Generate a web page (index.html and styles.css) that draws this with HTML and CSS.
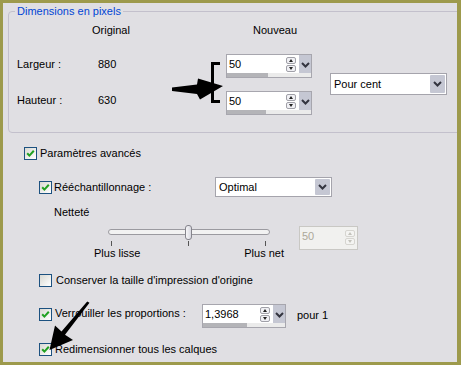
FILE: index.html
```html
<!DOCTYPE html>
<html lang="fr">
<head>
<meta charset="utf-8">
<title>Dimensions</title>
<link rel="stylesheet" href="styles.css">
</head>
<body>
<div class="frame">
  <div class="panel">
    <fieldset class="group">
      <legend>Dimensions en pixels</legend>
      <div class="dims">
        <span class="hd orig">Original</span>
        <span class="hd nouv">Nouveau</span>

        <span class="lbl r3">Largeur :</span>
        <span class="num r3">880</span>
        <div class="spin spin-w86 r3 c3">
          <div class="spin-main">
            <span class="spin-val">50</span>
            <span class="spin-btns"><span class="sb up"></span><span class="sb dn"></span></span>
            <span class="spin-drop"><svg width="9" height="6" viewBox="0 0 9 6"><path d="M1 1 L4.5 4.5 L8 1" fill="none" stroke="#33343f" stroke-width="2"/></svg></span>
          </div>
          <div class="spin-bar"><span class="fill" style="width:41px"></span></div>
        </div>

        <span class="lbl r5 lbl-b">Hauteur :</span>
        <span class="num r5 lbl-b">630</span>
        <div class="spin spin-w86 r5 c3">
          <div class="spin-main">
            <span class="spin-val">50</span>
            <span class="spin-btns"><span class="sb up"></span><span class="sb dn"></span></span>
            <span class="spin-drop"><svg width="9" height="6" viewBox="0 0 9 6"><path d="M1 1 L4.5 4.5 L8 1" fill="none" stroke="#33343f" stroke-width="2"/></svg></span>
          </div>
          <div class="spin-bar"><span class="fill" style="width:39px"></span></div>
        </div>

        <div class="select unit">
          <span class="sel-text">Pour cent</span>
          <span class="sel-btn"><svg width="9" height="6" viewBox="0 0 9 6"><path d="M1 1 L4.5 4.5 L8 1" fill="none" stroke="#33343f" stroke-width="2"/></svg></span>
        </div>
      </div>
    </fieldset>

    <div class="adv">
      <div class="row row-top">
        <span class="cb on"><svg width="11" height="11" viewBox="0 0 11 11"><path d="M2.2 5.2 L4.4 7.6 L8.8 2.8" fill="none" stroke="#21a121" stroke-width="2"/></svg></span>
        <span class="txt">Paramètres avancés</span>
      </div>

      <div class="sub">
        <div class="row row-reech">
          <span class="cb on"><svg width="11" height="11" viewBox="0 0 11 11"><path d="M2.2 5.2 L4.4 7.6 L8.8 2.8" fill="none" stroke="#21a121" stroke-width="2"/></svg></span>
          <span class="txt reech-lbl">Rééchantillonnage :</span>
          <div class="select optimal">
            <span class="sel-text">Optimal</span>
            <span class="sel-btn"><svg width="9" height="6" viewBox="0 0 9 6"><path d="M1 1 L4.5 4.5 L8 1" fill="none" stroke="#33343f" stroke-width="2"/></svg></span>
          </div>
        </div>

        <div class="nettete">Netteté</div>

        <div class="sharp-row">
          <div class="slider">
            <div class="track-area">
              <div class="track"></div>
              <span class="thumb"></span>
            </div>
            <div class="ticks"><i></i><i></i><i></i></div>
            <div class="slider-labels"><span>Plus lisse</span><span>Plus net</span></div>
          </div>
          <div class="spin-dis">
            <span class="dis-val">50</span>
            <span class="spin-btns dis"><span class="sb up"></span><span class="sb dn"></span></span>
          </div>
        </div>

        <div class="row row-cons">
          <span class="cb"></span>
          <span class="txt">Conserver la taille d'impression d'origine</span>
        </div>

        <div class="row row-lock">
          <span class="cb on cb-lock"><svg width="11" height="11" viewBox="0 0 11 11"><path d="M2.2 5.2 L4.4 7.6 L8.8 2.8" fill="none" stroke="#21a121" stroke-width="2"/></svg></span>
          <span class="txt lock-lbl">Verrouiller les proportions :</span>
          <div class="spin spin-w84">
            <div class="spin-main">
              <span class="spin-val">1,3968</span>
              <span class="spin-btns"><span class="sb up"></span><span class="sb dn"></span></span>
              <span class="spin-drop"><svg width="9" height="6" viewBox="0 0 9 6"><path d="M1 1 L4.5 4.5 L8 1" fill="none" stroke="#33343f" stroke-width="2"/></svg></span>
            </div>
            <div class="spin-bar"><span class="fill" style="width:44px"></span></div>
          </div>
          <span class="txt pour">pour 1</span>
        </div>

        <div class="row row-redim">
          <span class="cb on"><svg width="11" height="11" viewBox="0 0 11 11"><path d="M2.2 5.2 L4.4 7.6 L8.8 2.8" fill="none" stroke="#21a121" stroke-width="2"/></svg></span>
          <span class="txt">Redimensionner tous les calques</span>
        </div>
      </div>
    </div>
  </div>
</div>

<svg class="overlay" width="461" height="365" viewBox="0 0 461 365">
  <path d="M220 63.5 H212.5 V101.5 H220" fill="none" stroke="#000" stroke-width="3"/>
  <polygon points="172,87.5 197,84.5 198,78.5 223,86 200,99.5 197,94 172,91" fill="#000"/>
  <polygon points="87.2,301.4 61.5,331.5 55,325.5 49.5,350 73,340 65,334.7 89.5,302.8" fill="#000"/>
</svg>
</body>
</html>
```

FILE: styles.css
```css
* { box-sizing: border-box; }

html, body {
  margin: 0;
  padding: 0;
}

body {
  background: #9d9a4c;
  font-family: "Liberation Sans", Arial, sans-serif;
  font-size: 11px;
  line-height: 13px;
  color: #000;
  width: 461px;
  height: 365px;
  position: relative;
  overflow: hidden;
}

.frame {
  padding: 3px 4px 3px 3px;
  height: 365px;
}

.panel {
  background: #e0dfe3;
  height: 359px;
  overflow: hidden;
}

/* group box */
.group {
  margin: 2px -6px 0 5px;
  padding: 0 0 18px 8px;
  border: 1px solid #c3c0cc;
  border-radius: 4px;
  min-width: 0;
}

.group legend {
  color: #0046d5;
  padding: 0 2px;
  margin-left: -2px;
  line-height: 13px;
}

.dims {
  padding-top: 6px;
  display: grid;
  grid-template-columns: 75px 134px 104px 117px;
  grid-template-rows: 13px 17px 23px 14px 23px;
}

.hd { grid-row: 1; }
.orig { grid-column: 2; }
.nouv { grid-column: 3; padding-left: 27px; }

.lbl { grid-column: 1; padding-top: 4px; }
.num { grid-column: 2; padding-top: 4px; padding-left: 6px; }
.lbl-b { padding-top: 3px; }
.r3 { grid-row: 3; }
.r5 { grid-row: 5; }
.c3 { grid-column: 3; }

.unit {
  grid-column: 4;
  grid-row: 3 / 6;
  align-self: center;
  width: 117px;
}

/* spin box */
.spin {
  border: 1px solid #a7a6ae;
  background: #fff;
  height: 24px;
  display: flex;
  flex-direction: column;
}
.spin-w86 { width: 86px; }
.spin-w84 { width: 84px; }

.spin-main {
  display: flex;
  height: 18px;
}

.spin-val {
  flex: 1;
  padding-left: 2px;
  line-height: 18px;
}

.spin-btns {
  width: 11px;
  display: flex;
  flex-direction: column;
  justify-content: center;
  gap: 1px;
  padding-top: 1px;
}

.sb {
  height: 7px;
  width: 10px;
  border: 1px solid #a0a0a8;
  border-radius: 2px;
  background: #f0f0f4;
  position: relative;
}
.sb::after {
  content: "";
  position: absolute;
  left: 2px;
  width: 0;
  height: 0;
  border-left: 2px solid transparent;
  border-right: 2px solid transparent;
}
.sb.up::after { top: 1px; border-bottom: 3px solid #222; }
.sb.dn::after { top: 1px; border-top: 3px solid #222; }

.spin-drop {
  width: 13px;
  height: 19px;
  background: #c5c7d3;
  border-left: 1px solid #fff;
  display: flex;
  align-items: center;
  justify-content: center;
  margin-left: 1px;
}

.spin-bar {
  height: 4px;
  background: #ebebeb;
  margin-top: auto;
}
.spin-bar .fill {
  display: block;
  height: 4px;
  background: #b4b4b8;
}

/* select */
.select {
  display: flex;
  height: 22px;
  border: 1px solid #a5a4ac;
  background: #fff;
}
.sel-text {
  flex: 1;
  padding-left: 3px;
  line-height: 20px;
}
.sel-btn {
  width: 15px;
  margin: 1px;
  background: #c5c7d3;
  border-radius: 1px;
  display: flex;
  align-items: center;
  justify-content: center;
}

/* advanced */
.adv {
  padding-left: 21px;
}

.row {
  display: flex;
  align-items: center;
}

.cb {
  width: 13px;
  height: 13px;
  flex: none;
  border: 1px solid #1c5180;
  background: linear-gradient(135deg, #d8d8d2 0%, #f4f4f2 70%, #fff 100%);
  display: flex;
  align-items: center;
  justify-content: center;
}

.txt { white-space: nowrap; }

.row-top {
  margin-top: 14px;
  height: 13px;
  gap: 3px;
}

.sub {
  margin-left: 15px;
}

.row-reech {
  margin-top: 17px;
  height: 20px;
  gap: 2px;
}
.reech-lbl { width: 159px; }
.optimal { width: 117px; height: 20px; }
.optimal .sel-text { line-height: 18px; }
.optimal .sel-btn { width: 15px; }

.nettete {
  margin-top: 9px;
  padding-left: 15px;
}

.sharp-row {
  display: flex;
  margin-top: 6px;
}

.slider {
  margin-left: 54px;
  width: 191px;
}

.track-area {
  position: relative;
  height: 15px;
}

.track {
  position: relative;
  top: 4px;
  margin-left: 15px;
  width: 162px;
  height: 6px;
  border: 1px solid #9b9aa0;
  border-radius: 3px;
  background: #f2f2f2;
}

.thumb {
  position: absolute;
  left: 92px;
  top: 0;
  width: 7px;
  height: 15px;
  border: 1px solid #85848c;
  border-radius: 3px;
  background: linear-gradient(90deg, #f6f6f8, #d8d8e0);
}

.ticks {
  display: flex;
  justify-content: space-between;
  margin: 1px 0 0 18px;
  width: 155px;
  height: 5px;
}
.ticks i {
  display: block;
  width: 1px;
  height: 5px;
  background: #555;
}

.slider-labels {
  display: flex;
  justify-content: space-between;
  padding-left: 1px;
  height: 13px;
  margin-top: 1px;
}

.spin-dis {
  margin: 1px 0 0 15px;
  width: 59px;
  height: 24px;
  border: 1px solid #c9c8c4;
  background: #f1f1ef;
  display: flex;
}
.dis-val {
  flex: 1;
  color: #aca899;
  padding-left: 2px;
  line-height: 18px;
}
.spin-btns.dis {
  height: 20px;
  margin-right: 1px;
}
.spin-btns.dis .sb {
  border-color: #d6d5d0;
  background: #f4f4f2;
}
.spin-btns.dis .sb.up::after { border-bottom-color: #c3c2bc; }
.spin-btns.dis .sb.dn::after { border-top-color: #c3c2bc; }

.row-cons {
  margin-top: 14px;
  height: 13px;
  gap: 4px;
}

.row-lock {
  margin-top: 17px;
  align-items: flex-start;
}
.cb-lock { margin-top: 4px; }
.lock-lbl {
  width: 150px;
  padding-left: 3px;
  margin-top: 3px;
}
.pour {
  margin: 5px 0 0 11px;
}

.row-redim {
  margin-top: 15px;
  height: 13px;
  gap: 3px;
}

.overlay {
  position: absolute;
  left: 0;
  top: 0;
  pointer-events: none;
}
```
